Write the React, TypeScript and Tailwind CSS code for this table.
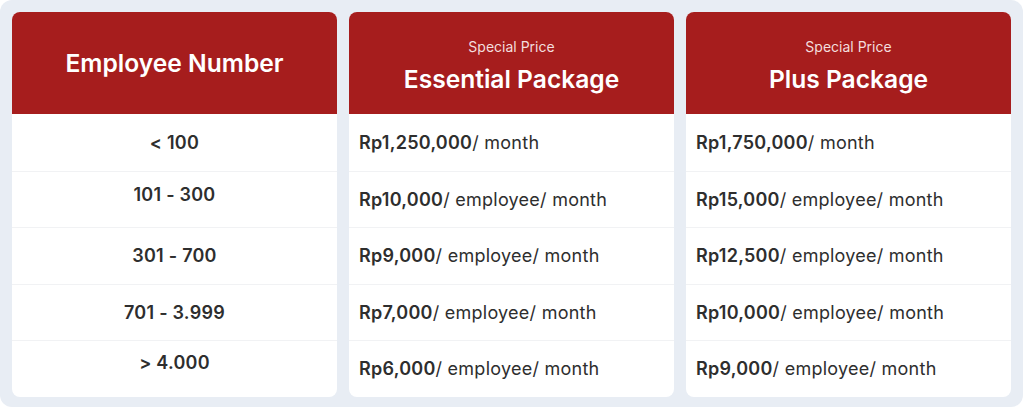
import React from "react";

const ranges = ["< 100", "101 - 300", "301 - 700", "701 - 3.999", "> 4.000"];
const rangePad = ["", "pb-[10px]", "", "", "pb-[12px]"];
const essential: [string, string][] = [
  ["Rp1,250,000", "/ month"],
  ["Rp10,000", "/ employee/ month"],
  ["Rp9,000", "/ employee/ month"],
  ["Rp7,000", "/ employee/ month"],
  ["Rp6,000", "/ employee/ month"],
];
const plus: [string, string][] = [
  ["Rp1,750,000", "/ month"],
  ["Rp15,000", "/ employee/ month"],
  ["Rp12,500", "/ employee/ month"],
  ["Rp10,000", "/ employee/ month"],
  ["Rp9,000", "/ employee/ month"],
];

function PriceCard({ title, rows }: { title: string; rows: [string, string][] }) {
  return (
    <div className="flex flex-col bg-white rounded-[8px] overflow-hidden">
      <div className="h-[102px] bg-[#a61d1d] flex flex-col items-center justify-center text-white">
        <div className="text-[14px] leading-[18px] text-[#f3dede] mt-[5px]">Special Price</div>
        <div className="text-[24.6px] leading-[30px] font-semibold mt-[8px]">{title}</div>
      </div>
      {rows.map(([b, r], i) => (
        <div
          key={i}
          className={`h-[56.5px] flex items-center pl-[10px] text-[18px] tracking-[0.25px] text-[#2e2e2e] ${i > 0 ? "border-t border-[#f1f2f4]" : ""}`}
        >
          <span className="font-semibold">{b}</span>
          <span>{r}</span>
        </div>
      ))}
    </div>
  );
}

export default function App() {
  return (
    <div className="w-[1024px] h-[409px] bg-white" style={{ fontFamily: "Inter, 'Noto Sans', sans-serif" }}>
      <div className="w-[1023px] h-[407px] bg-[#e8edf4] rounded-[12px] p-[12px] grid grid-cols-3 gap-[12px] items-start">
        <div className="flex flex-col bg-white rounded-[8px] overflow-hidden">
          <div className="h-[102px] bg-[#a61d1d] flex items-center justify-center text-white">
            <div className="text-[24.6px] leading-[30px] font-semibold">Employee Number</div>
          </div>
          {ranges.map((r, i) => (
            <div
              key={i}
              className={`h-[56.5px] flex items-center justify-center text-[18px] tracking-[0.25px] font-semibold text-[#2e2e2e] ${rangePad[i]} ${i > 0 ? "border-t border-[#f1f2f4]" : ""}`}
            >
              {r}
            </div>
          ))}
        </div>
        <PriceCard title="Essential Package" rows={essential} />
        <PriceCard title="Plus Package" rows={plus} />
      </div>
    </div>
  );
}
